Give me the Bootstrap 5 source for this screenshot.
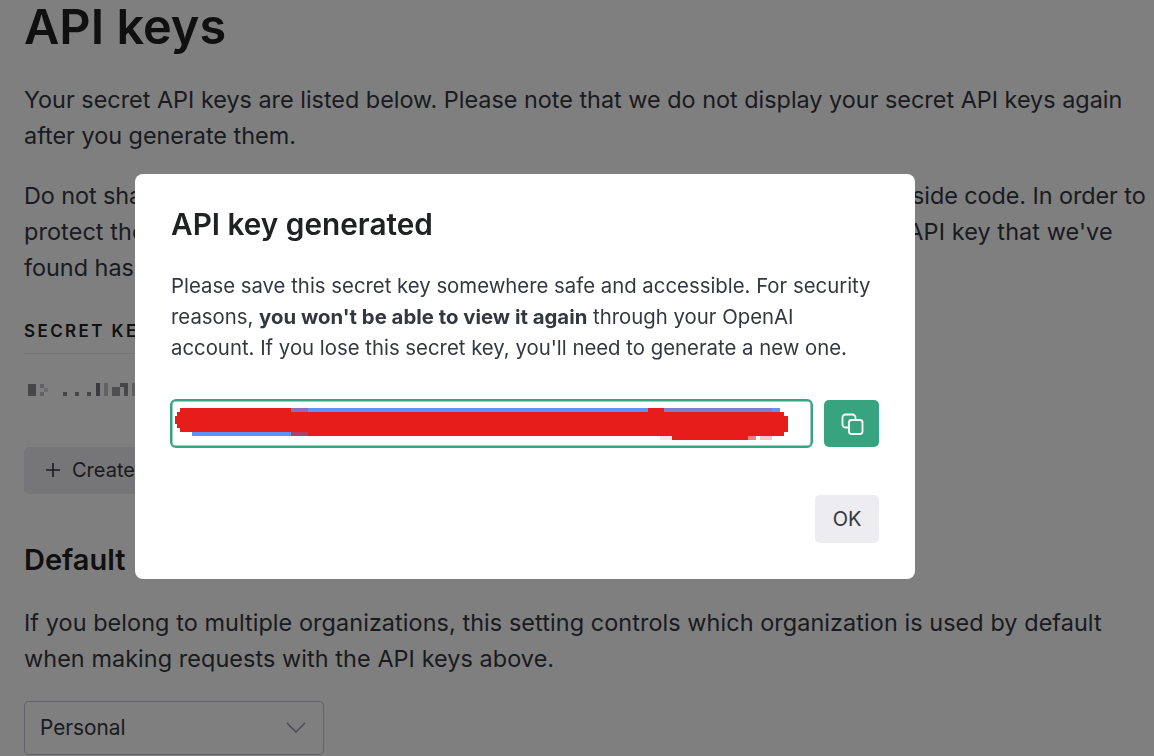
<!DOCTYPE html>
<html lang="en">
<head>
    <meta charset="UTF-8">
    <meta name="viewport" content="width=device-width, initial-scale=1.0">
    <title>API keys</title>
    <link href="https://cdn.jsdelivr.net/npm/bootstrap@5.3.0/dist/css/bootstrap.min.css" rel="stylesheet">
    <style>
        html, body { height: 756px; overflow: hidden; }
        body { font-family: Inter, "Liberation Sans", sans-serif; color: #202123; background: #fff; }
        .pagina { padding: 0 0 0 24px; width: 1154px; }
        .pagina h1 { font-size: 48.6px; font-weight: 600; line-height: 54px; margin: 0 0 28px; }
        .pagina p { font-size: 23.4px; line-height: 36px; margin: 0 0 24px; color: #353740; white-space: nowrap; }
        .linea-a { letter-spacing: -.07px; }
        .linea-b { letter-spacing: .11px; }
        .linea-c { letter-spacing: .08px; }
        .cabecera-tabla { font-size: 17px; font-weight: 600; letter-spacing: 2.4px; line-height: 22px; margin-top: 34px; padding-bottom: 11px; border-bottom: 1px solid #ececf1; width: 700px; }
        .clave-borrosa { display: block; margin: 28px 0 49px 4px; }
        .btn-crear { background: #ececf1; color: #353740; font-size: 20px; height: 47px; width: 330px; border: 0; border-radius: 5px; padding: 0 20px 2px; display: flex; align-items: center; gap: 10px; }
        .pagina h2 { font-size: 29px; font-weight: 600; line-height: 36px; margin: 48px 0 27px; word-spacing: 3px; }
        .selector { width: 300px; height: 54px; border: 1px solid #c5c5d2; border-radius: 5px; font-size: 20.8px; color: #353740; padding: 0 17px 0 15px; margin-top: 11px; }
        .modal-backdrop { opacity: .5; }
        .dialogo { width: 780px; max-width: 780px; margin: 174px 0 0 135px; }
        .dialogo .modal-content { border: 0; border-radius: 8px; height: 405px; padding: 30px 36px 36px; }
        .dialogo h3 { font-size: 29.75px; font-weight: 600; line-height: 40px; margin: 0 0 26px; color: #202123; }
        .dialogo p { font-size: 20.35px; line-height: 31px; margin: 0 0 36px; color: #353740; white-space: nowrap; }
        .fila-clave { width: 709px; margin-left: -1px; }
        .campo-clave { width: 643px; height: 49px; border: 2px solid #37a47f; border-radius: 6px; background: #fff; overflow: hidden; flex: none; box-shadow: inset 0 0 0 .5px #37a47f; }
        .campo-clave svg { display: block; }
        .btn-copiar { width: 55px; height: 47px; padding: 0; border: 0; border-radius: 5px; background: #37a47f; }
        .btn-copiar:hover { background: #37a47f; }
        .btn-ok { width: 64px; height: 48px; padding: 0; border: 0; border-radius: 5px; background: #ececf1; color: #353740; font-size: 20px; }
    </style>
</head>
<body>
    <main class="pagina">
        <h1>API keys</h1>
        <p>Your secret API keys are listed below. Please note that we do not display your secret API keys again<br>after you generate them.</p>
        <p><span class="linea-a">Do not share your API key with others, or expose it in the browser or other client-side code. In order to</span><br><span class="linea-b">protect the security of your account, OpenAI may also automatically rotate any API key that we've</span><br>found has leaked publicly.</p>
        <div class="cabecera-tabla">SECRET KEY</div>
        <!-- clave pixelada -->
        <svg class="clave-borrosa" width="120" height="16" viewBox="0 0 120 16" fill="#3f3f4a">
            <rect x="0" y="2" width="8" height="12" opacity=".6"/>
            <rect x="12" y="2" width="4" height="4" opacity=".3"/>
            <rect x="16" y="6" width="4" height="4" opacity=".2"/>
            <rect x="12" y="10" width="4" height="4" opacity=".3"/>
            <rect x="35" y="10" width="4" height="4" opacity=".6"/>
            <rect x="47" y="10" width="4" height="4" opacity=".6"/>
            <rect x="59" y="10" width="4" height="4" opacity=".6"/>
            <rect x="68" y="1" width="4" height="13" opacity=".7"/>
            <rect x="76" y="1" width="4" height="13" opacity=".3"/>
            <rect x="84" y="5" width="8" height="9" opacity=".5"/>
            <rect x="92" y="1" width="8" height="4" opacity=".6"/>
            <rect x="96" y="5" width="4" height="9" opacity=".6"/>
            <rect x="104" y="1" width="8" height="13" opacity=".35"/>
        </svg>
        <button class="btn-crear" type="button">
            <svg width="18" height="18" viewBox="0 0 18 18" fill="none" stroke="#353740" stroke-width="1.6"><path d="M9 2v14M2 9h14"/></svg>
            Create new secret key
        </button>
        <h2>Default organization</h2>
        <p class="linea-c">If you belong to multiple organizations, this setting controls which organization is used by default<br>when making requests with the API keys above.</p>
        <div class="selector d-flex align-items-center justify-content-between">
            <span>Personal</span>
            <svg width="20" height="12" viewBox="0 0 20 12" fill="none" stroke="#8e8ea0" stroke-width="1.4"><path d="M1 1l9 9 9-9"/></svg>
        </div>
    </main>

    <div class="modal-backdrop show"></div>
    <div class="modal d-block" role="dialog">
        <div class="modal-dialog dialogo">
            <div class="modal-content">
                <h3>API key generated</h3>
                <p>Please save this secret key somewhere safe and accessible. For security<br>reasons, <b>you won't be able to view it again</b> through your OpenAI<br>account. If you lose this secret key, you'll need to generate a new one.</p>
                <div class="fila-clave d-flex align-items-center justify-content-between">
                    <div class="campo-clave">
                        <!-- seleccion azul tapada con rojo, coordenadas relativas al campo -->
                        <svg width="639" height="45" viewBox="0 0 639 45" shape-rendering="crispEdges">
                            <rect x="136" y="7" width="472" height="4" fill="#5b94fb"/>
                            <rect x="20" y="31" width="100" height="4" fill="#5b94fb"/>
                            <rect x="492" y="7" width="108" height="4" fill="#7b7fd0"/>
                            <rect x="8" y="7" width="112" height="24" fill="#e71d1c"/>
                            <rect x="3" y="15" width="6" height="8" fill="#e71d1c"/>
                            <rect x="5" y="11" width="4" height="16" fill="#e71d1c"/>
                            <rect x="119" y="7" width="17" height="4" fill="#8a6bc0"/>
                            <rect x="119" y="11" width="17" height="20" fill="#e71d1c"/>
                            <rect x="119" y="31" width="17" height="4" fill="#b0406a"/>
                            <rect x="136" y="11" width="476" height="24" fill="#e71d1c"/>
                            <rect x="476" y="7" width="16" height="4" fill="#e71d1c"/>
                            <rect x="610" y="15" width="6" height="16" fill="#e71d1c"/>
                            <rect x="500" y="35" width="76" height="4" fill="#e71d1c"/>
                            <rect x="488" y="35" width="12" height="4" fill="#fde3e3"/>
                            <rect x="576" y="35" width="8" height="4" fill="#f47f7e"/>
                            <rect x="588" y="35" width="12" height="4" fill="#fbc6c6"/>
                        </svg>
                    </div>
                    <button class="btn btn-copiar d-flex align-items-center justify-content-center" type="button" aria-label="Copy">
                        <svg width="24" height="24" viewBox="0 0 24 24" fill="none" stroke="#fff" stroke-width="1.8">
                            <path d="M15.5 7V5.5A3 3 0 0 0 12.5 2.5H5.5A3 3 0 0 0 2.500 5.500V12.500A3 3 0 0 0 5.500 15.500H8"/>
                            <rect x="9" y="8" width="13.500" height="14" rx="2.500"/>
                        </svg>
                    </button>
                </div>
                <div class="d-flex justify-content-end mt-auto">
                    <button class="btn btn-ok" type="button">OK</button>
                </div>
            </div>
        </div>
    </div>
    <script src="https://cdn.jsdelivr.net/npm/bootstrap@5.3.0/dist/js/bootstrap.bundle.min.js"></script>
</body>
</html>
